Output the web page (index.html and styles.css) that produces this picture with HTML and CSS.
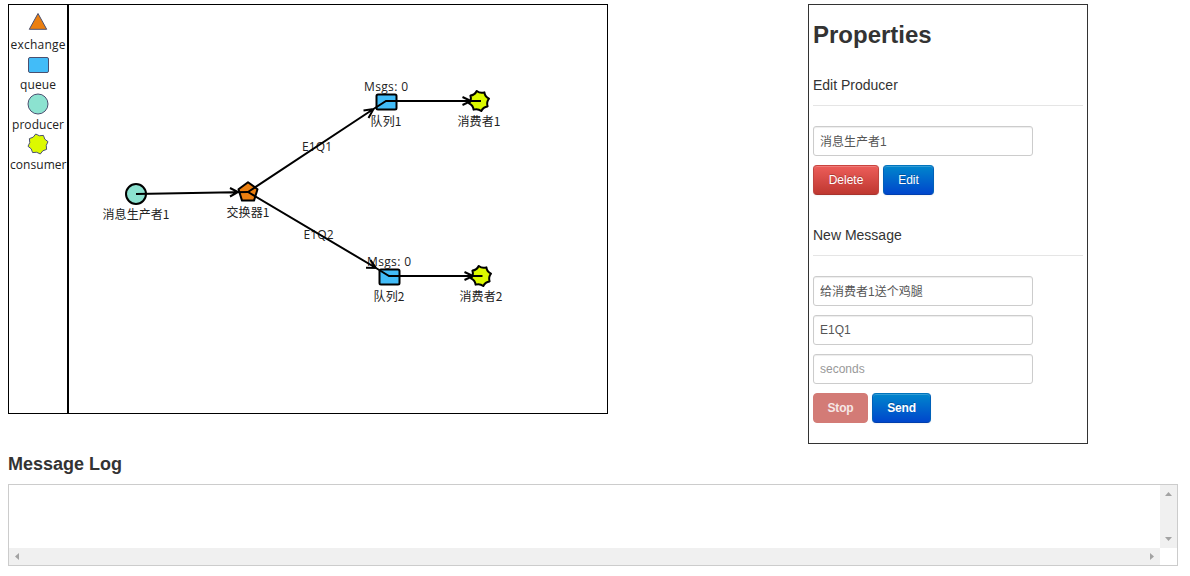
FILE: index.html
```html
<!DOCTYPE html>
<html lang="zh-CN">
<head>
<meta charset="utf-8">
<title>RabbitMQ Simulator</title>
<link rel="stylesheet" href="styles.css">
</head>
<body>
<div class="workspace">
  <svg class="diagram" width="600" height="410" viewBox="8 4 600 410">
    <defs>
      <path id="gear" d="M-2.3-10Q1.2-7.2 5.4-8.6Q5.900-4.200 10-2.300Q7.200 1.200 8.600 5.400Q4.200 5.900 2.300 10Q-1.200 7.200-5.400 8.600Q-5.900 4.200-10 2.300Q-7.200-1.200-8.600-5.400Q-4.200-5.900-2.300-10Z"/>
    </defs>
    <rect class="frame" x="8.5" y="4.5" width="599" height="409"/>
    <path class="divider" d="M68 4V414"/>
    <g class="palette">
      <path class="exchange" d="M38 13.5L46.7 29.3H29.3Z"/>
      <text x="10.5" y="49" textLength="55">exchange</text>
      <rect class="queue" x="28.5" y="57.5" width="20" height="15" rx="1.5"/>
      <text x="20" y="89" textLength="36">queue</text>
      <circle class="producer" cx="38" cy="104" r="10"/>
      <text x="12" y="129" textLength="52">producer</text>
      <use class="consumer" href="#gear" x="38" y="144"/>
      <text x="10" y="169" textLength="56.5">consumer</text>
    </g>
    <g class="nodes">
      <circle class="producer" cx="136" cy="194" r="10"/>
      <path class="exchange" d="M248 182.2L257.5 189.2L254 200.6H242L238.5 189.2Z"/>
      <rect class="queue" x="376.5" y="94.5" width="20" height="15" rx="1.5"/>
      <rect class="queue" x="379.5" y="269.5" width="20" height="15" rx="1.5"/>
      <use class="consumer" href="#gear" x="479" y="101"/>
      <use class="consumer" href="#gear" x="481" y="276"/>
    </g>
    <g class="labels">
      <text x="102.500" y="219" textLength="67">消息生产者1</text>
      <text x="226.500" y="217" textLength="43">交换器1</text>
      <text x="370.500" y="126" textLength="31">队列1</text>
      <text x="457.500" y="126" textLength="43">消费者1</text>
      <text x="373.500" y="301" textLength="31">队列2</text>
      <text x="459.500" y="301" textLength="43">消费者2</text>
      <text class="latin" x="364" y="91" textLength="44">Msgs: 0</text>
      <text class="latin" x="367" y="266" textLength="44">Msgs: 0</text>
      <text class="latin" x="302" y="151" textLength="30">E1Q1</text>
      <text class="latin" x="303.500" y="239" textLength="30">E1Q2</text>
    </g>
    <g class="links">
      <path d="M136 194L248 192M230 188L238 192.100L230 196.500"/>
      <path d="M248 192L373.500 109L386 101H481M363.500 110.500L373.500 109L368.500 118"/>
      <path d="M248 192L376 268L389 276H482.500M366 267.700L376 268L370.500 260"/>
      <path d="M462.500 97L471 101L462.500 105M464.500 272L473 276L464.500 280"/>
    </g>
  </svg>

  <aside class="properties">
    <h1 class="panel-title">Properties</h1>
    <form class="group">
      <div class="legend">Edit Producer</div>
      <input class="field cjk" type="text" value="消息生产者1">
      <div class="buttons">
        <button class="btn danger" type="button">Delete</button>
        <button class="btn primary edit" type="button">Edit</button>
      </div>
    </form>
    <form class="group">
      <div class="legend">New Message</div>
      <input class="field cjk" type="text" value="给消费者1送个鸡腿">
      <input class="field" type="text" value="E1Q1">
      <input class="field" type="text" placeholder="seconds">
      <div class="buttons">
        <button class="btn stop" type="button">Stop</button>
        <button class="btn primary send" type="button">Send</button>
      </div>
    </form>
  </aside>
</div>

<h2 class="log-title">Message Log</h2>
<div class="log">
  <div class="log-content"></div>
  <div class="scroll-v">
    <svg width="7" height="4" viewBox="0 0 7 4"><path d="M0 4L3.500 0L7 4Z"/></svg>
    <svg width="7" height="4" viewBox="0 0 7 4"><path d="M0 0L3.500 4L7 0Z"/></svg>
  </div>
  <div class="scroll-h">
    <svg width="4" height="7" viewBox="0 0 4 7"><path d="M4 0L0 3.500L4 7Z"/></svg>
    <svg width="4" height="7" viewBox="0 0 4 7"><path d="M0 0L4 3.500L0 7Z"/></svg>
  </div>
</div>
</body>
</html>
```
FILE: styles.css
```css
* { box-sizing: border-box; }
body {
  margin: 0;
  padding: 4px 12px 0 8px;
  height: 576px;
  overflow: hidden;
  background: #fff;
  color: #333;
  font-family: "Liberation Sans", "Noto Sans CJK SC", sans-serif;
}
.workspace { display: flex; gap: 200px; align-items: flex-start; height: 440px; }
.diagram { display: block; flex: none; }
.diagram text { font: 12px "Open Sans", "Noto Sans CJK SC", sans-serif; fill: #222; }
.diagram .labels text { font-family: "Noto Sans CJK SC", sans-serif; }
.diagram .labels .latin, .diagram .palette text { font-family: "Open Sans", sans-serif; }
.frame { fill: #fff; stroke: #000; }
.divider { stroke: #000; stroke-width: 2; }
.exchange { fill: #eb7f10; }
.queue { fill: #42bcf8; }
.producer { fill: #8ce2d0; }
.consumer { fill: #dcf900; }
.palette { stroke: #4a5070; stroke-width: 1; stroke-linejoin: round; }
.palette text { stroke: none; }
.nodes { stroke: #000; stroke-width: 2; stroke-linejoin: round; }
.links { fill: none; stroke: #000; stroke-width: 2; }

.properties { width: 280px; height: 440px; padding: 0 4px; border: 1px solid #333; }
.panel-title { margin: 10px 0 20px; font-size: 24px; line-height: 40px; }
.group { height: 150px; margin: 0; }
.legend {
  height: 31px;
  margin-bottom: 20px;
  border-bottom: 1px solid #e5e5e5;
  font-size: 14px;
  line-height: 20px;
}
.field {
  display: block;
  width: 220px;
  height: 30px;
  margin: 0 0 9px;
  padding: 4px 6px;
  border: 1px solid #ccc;
  border-radius: 3px;
  box-shadow: inset 0 1px 1px rgba(0, 0, 0, .075);
  background: #fff;
  color: #555;
  font: 12px/20px "Liberation Sans", "Noto Sans CJK SC", sans-serif;
}
.cjk { padding: 3px 6px 5px; }
.field::placeholder { color: #999; opacity: 1; }
.buttons { display: flex; gap: 4px; }
.btn {
  height: 30px;
  padding: 0;
  border: 1px solid;
  border-radius: 4px;
  box-shadow: inset 0 1px 0 rgba(255, 255, 255, .2), 0 1px 2px rgba(0, 0, 0, .05);
  color: #fff;
  font: 12px/20px "Liberation Sans", sans-serif;
  text-shadow: 0 -1px 0 rgba(0, 0, 0, .25);
}
.danger {
  width: 66px;
  border-color: #c9433e #c04540 #a8332d;
  background: linear-gradient(#ee5f5b, #bd362f) border-box;
}
.primary {
  border-color: #0074bd #0060b8 #003fad;
  background: linear-gradient(#0088cc, #0044cc) border-box;
}
.edit { width: 51px; }
.stop {
  width: 55px;
  border-color: #d37b76;
  background: #d37b76;
  box-shadow: none;
  color: #f6e7e6;
  font-weight: bold;
  letter-spacing: -.2px;
  text-shadow: none;
}
.send { width: 59px; font-weight: bold; letter-spacing: -.2px; }

.log-title { margin: 0; padding-top: 10px; height: 40px; font-size: 18px; line-height: 20px; }
.log {
  display: grid;
  grid-template: 1fr 17px / 1fr 17px;
  height: 82px;
  border: 1px solid #ccc;
}
.scroll-v, .scroll-h {
  display: flex;
  justify-content: space-between;
  align-items: center;
  background: #f0f0f0;
  fill: #a3a3a3;
}
.scroll-v { flex-direction: column; padding: 7px 0; }
.scroll-h { padding: 0 6px; }
```
